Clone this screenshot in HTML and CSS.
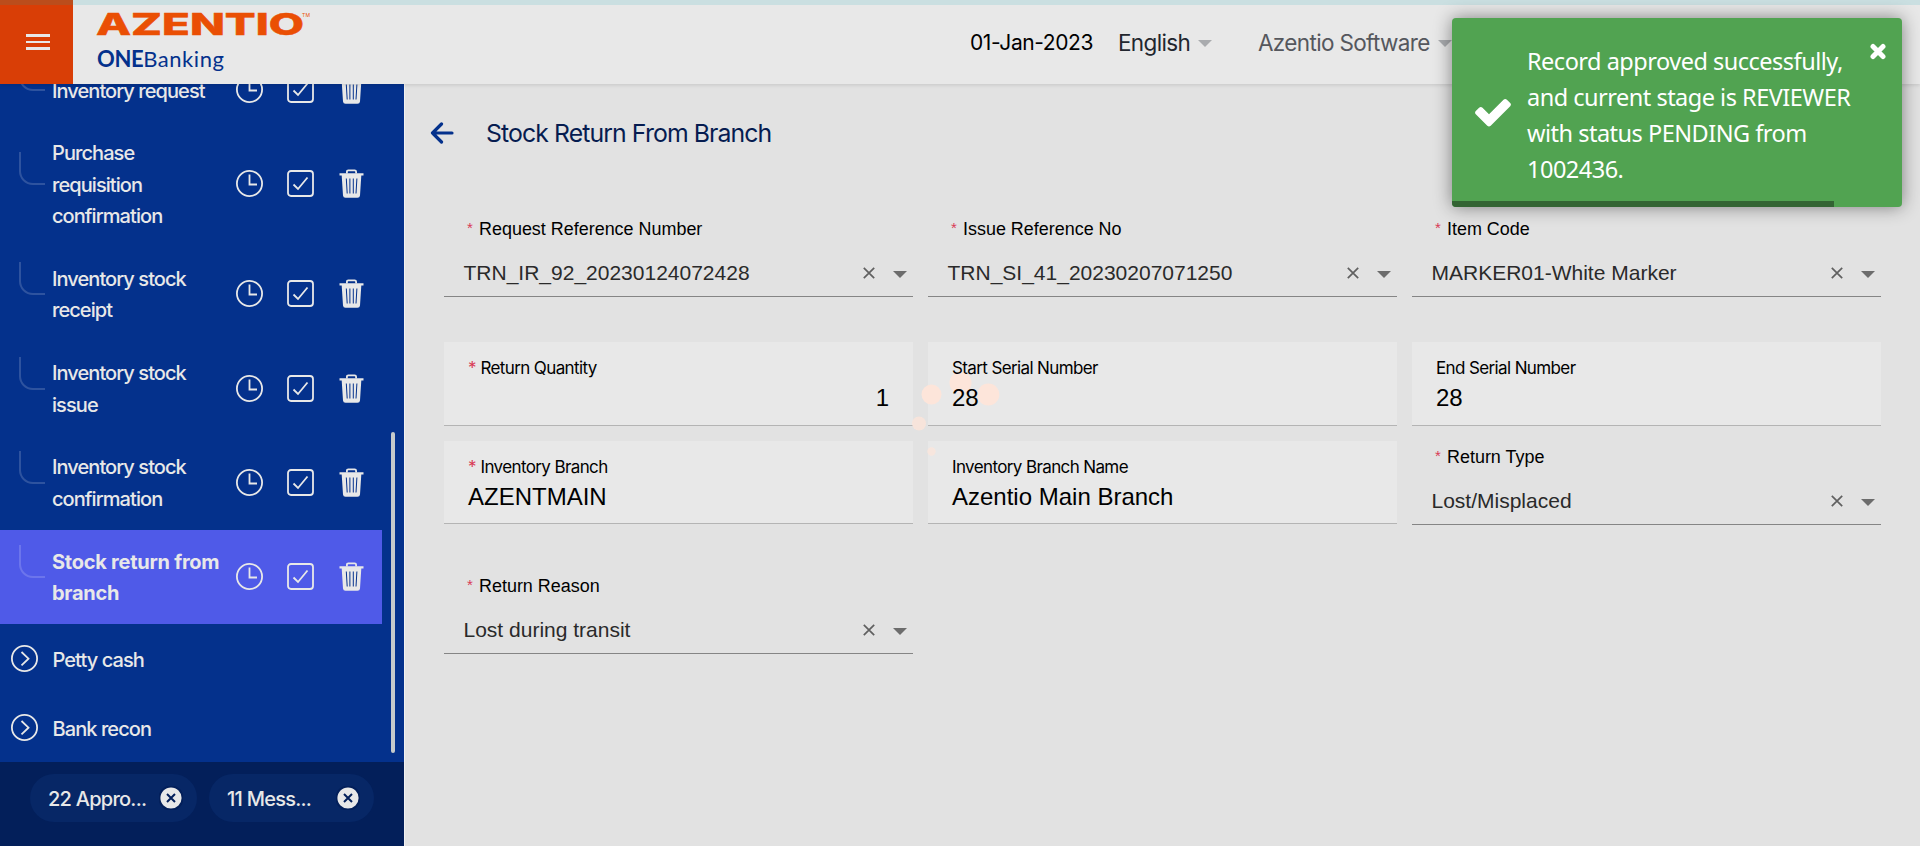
FILE: index.html
```
<!DOCTYPE html>
<html lang="en">
<head>
<meta charset="utf-8">
<title>Stock Return From Branch</title>
<link rel="stylesheet" href="styles.css">
</head>
<body>
<svg class="sprite" aria-hidden="true">
  <symbol id="clock" viewBox="0 0 27 27"><circle cx="13.5" cy="13.5" r="12.6"/><path d="M13.5 4.5v10h7.5"/></symbol>
  <symbol id="check" viewBox="0 0 27 27"><rect x="1" y="1" width="25" height="25" rx="3"/><path d="M6.500 14.500l4.500 4.500 9.500-11.500"/></symbol>
  <symbol id="trash" viewBox="0 0 25 29"><path class="solid" d="M.5 4.200h24v2.400h-2.200L21 26.500q-.2 2.300-2.500 2.300h-12q-2.300 0-2.500-2.300L2.700 6.600H.5z"/><path d="M7.900 4.500V2.800q0-1.500 1.500-1.500h6.200q1.500 0 1.500 1.500v1.700"/><path class="slit" d="M7.300 9.500l.9 15M10.900 9.500v15M14.300 9.500v15M17.900 9.500l-.9 15"/></symbol>
  <symbol id="chevron" viewBox="0 0 27 27"><circle cx="13.500" cy="13.500" r="12.600"/><path d="M10.500 7l7 6.700-7 6.700"/></symbol>
  <symbol id="clear" viewBox="0 0 12 12"><path d="M.8.800l10.400 10.400M11.200.800L.8 11.200"/></symbol>
  <symbol id="caret" viewBox="0 0 14 7"><path d="M0 0h14L7 7z"/></symbol>
  <symbol id="dismiss" viewBox="0 0 24 24"><circle cx="12" cy="12" r="11.600"/><path d="M8 8l8 8M16 8l-8 8"/></symbol>
</svg>

<header class="header">
  <button class="menu" aria-label="Menu"><span></span><span></span><span></span></button>
  <div class="brand">
    <svg class="logo" width="216" height="28" viewBox="0 0 216 28">
      <text class="logo-name" x="-1" y="25" textLength="208" lengthAdjust="spacingAndGlyphs">AZENTIO</text>
      <text class="logo-tm" x="205" y="7" textLength="8">TM</text>
    </svg>
    <div class="product"><b>ONE</b>Banking</div>
  </div>
  <div class="tools">
    <span class="date">01-Jan-2023</span>
    <span class="pick lang">English<svg><use href="#caret"/></svg></span>
    <span class="pick org">Azentio Software<svg><use href="#caret"/></svg></span>
  </div>
</header>

<div class="body">
  <aside class="sidebar">
    <nav class="nav">
      <div class="item"><i class="elbow"></i><span>Inventory request</span><div class="acts"><svg><use href="#clock"/></svg><svg><use href="#check"/></svg><svg class="bin"><use href="#trash"/></svg></div></div>
      <div class="item"><i class="elbow"></i><span>Purchase requisition confirmation</span><div class="acts"><svg><use href="#clock"/></svg><svg><use href="#check"/></svg><svg class="bin"><use href="#trash"/></svg></div></div>
      <div class="item"><i class="elbow"></i><span>Inventory stock receipt</span><div class="acts"><svg><use href="#clock"/></svg><svg><use href="#check"/></svg><svg class="bin"><use href="#trash"/></svg></div></div>
      <div class="item"><i class="elbow"></i><span>Inventory stock issue</span><div class="acts"><svg><use href="#clock"/></svg><svg><use href="#check"/></svg><svg class="bin"><use href="#trash"/></svg></div></div>
      <div class="item"><i class="elbow"></i><span>Inventory stock confirmation</span><div class="acts"><svg><use href="#clock"/></svg><svg><use href="#check"/></svg><svg class="bin"><use href="#trash"/></svg></div></div>
      <div class="item active"><i class="elbow"></i><span>Stock return from branch</span><div class="acts"><svg><use href="#clock"/></svg><svg><use href="#check"/></svg><svg class="bin"><use href="#trash"/></svg></div></div>
      <div class="group"><svg><use href="#chevron"/></svg><span>Petty cash</span></div>
      <div class="group"><svg><use href="#chevron"/></svg><span>Bank recon</span></div>
    </nav>
    <div class="thumb"></div>
    <footer class="chips">
      <div class="chip"><span>22 Appro...</span><svg><use href="#dismiss"/></svg></div>
      <div class="chip second"><span>11 Mess...</span><svg><use href="#dismiss"/></svg></div>
    </footer>
  </aside>

  <main class="main">
    <div class="title">
      <svg width="24" height="22" viewBox="0 0 24 22"><path d="M22 11H2.500M11.500 2L2.500 11l9 9"/></svg>
      <h1>Stock Return From Branch</h1>
    </div>
    <form class="grid">
      <div class="select"><label><em>*</em>Request Reference Number</label><div class="value"><span>TRN_IR_92_20230124072428</span><svg class="x"><use href="#clear"/></svg><svg class="down"><use href="#caret"/></svg></div></div>
      <div class="select"><label><em>*</em>Issue Reference No</label><div class="value"><span>TRN_SI_41_20230207071250</span><svg class="x"><use href="#clear"/></svg><svg class="down"><use href="#caret"/></svg></div></div>
      <div class="select"><label><em>*</em>Item Code</label><div class="value"><span>MARKER01-White Marker</span><svg class="x"><use href="#clear"/></svg><svg class="down"><use href="#caret"/></svg></div></div>
      <div class="card"><label><em>*</em>Return Quantity</label><div class="entry number">1</div></div>
      <div class="card"><label>Start Serial Number</label><div class="entry">28</div></div>
      <div class="card"><label>End Serial Number</label><div class="entry">28</div></div>
      <div class="card short"><label><em>*</em>Inventory Branch</label><div class="entry">AZENTMAIN</div></div>
      <div class="card short"><label>Inventory Branch Name</label><div class="entry">Azentio Main Branch</div></div>
      <div class="select"><label><em>*</em>Return Type</label><div class="value"><span>Lost/Misplaced</span><svg class="x"><use href="#clear"/></svg><svg class="down"><use href="#caret"/></svg></div></div>
      <div class="select"><label><em>*</em>Return Reason</label><div class="value"><span>Lost during transit</span><svg class="x"><use href="#clear"/></svg><svg class="down"><use href="#caret"/></svg></div></div>
    </form>
  </main>
</div>

<svg class="loader" width="90" height="90" viewBox="0 0 90 90">
  <circle cx="21.500" cy="24.500" r="10"/>
  <circle cx="50.500" cy="12.700" r="11"/>
  <circle cx="78.300" cy="24.500" r="11"/>
  <circle cx="9" cy="53.500" r="7" opacity=".8"/>
  <circle cx="21.500" cy="81.500" r="4.200" opacity=".7"/>
</svg>

<div class="toast">
  <svg class="tick" width="36" height="28" viewBox="0 0 36 28"><path d="M35.200 7.200L15.700 26.700q-1.700 1.600-3.400 0L.8 15.300q-1.500-1.600 0-3.300l3.300-3.300q1.700-1.600 3.400 0l6.500 6.500L28.500.8q1.700-1.600 3.400 0l3.300 3.200q1.500 1.600 0 3.200z"/></svg>
  <p>Record approved successfully,<br>and current stage is REVIEWER<br>with status PENDING from<br>1002436.</p>
  <svg class="close" width="16" height="17" viewBox="0 0 16 17"><path d="M3 3.500l10 10M13 3.500l-10 10"/></svg>
  <div class="progress"></div>
</div>
</body>
</html>
```

FILE: styles.css
```
* { box-sizing: border-box; }
body {
  margin: 0;
  height: 846px;
  display: flex;
  flex-direction: column;
  overflow: hidden;
  background: #e2e2e2;
  font-family: Inter, "Liberation Sans", sans-serif;
  color: #000;
}
svg { display: block; flex: none; }
.sprite { position: absolute; width: 0; height: 0; }

/* Header */
.header {
  position: relative;
  z-index: 2;
  flex: none;
  display: flex;
  height: 84px;
  border-top: 5px solid #cadfe1;
  background: #e8e8e8;
  box-shadow: 0 1px 4px rgba(0, 0, 0, .13);
}
.menu {
  flex: none;
  width: 73px;
  height: 84px;
  margin: -5px 0 0;
  padding: 0 0 5px 26px;
  border: 0;
  border-top: 5px solid #bb4d1c;
  background: #d93e06;
  display: flex;
  flex-direction: column;
  justify-content: center;
  gap: 4px;
}
.menu span { width: 24px; height: 2.500px; background: #e8e8e8; }
.brand { flex: none; width: 897px; padding: 5px 0 0 24px; }
.logo { overflow: visible; }
.logo-name { font: 800 30px Inter, sans-serif; fill: #ea4f04; stroke: #ea4f04; stroke-width: .5px; }
.logo-tm { font: 5px Inter, sans-serif; fill: #ea4f04; }
.product {
  margin-top: 7px;
  font: 22px/28px Lato, sans-serif;
  letter-spacing: .55px;
  color: #04318c;
}
.product b { letter-spacing: -.4px; }
.tools { display: flex; align-items: center; padding-bottom: 4px; white-space: nowrap; }
.date { width: 148px; font-size: 21px; letter-spacing: -.4px; }
.pick { display: flex; align-items: center; gap: 8px; font-size: 22.500px; letter-spacing: -.65px; }
.pick svg { width: 14px; height: 7px; margin-top: 1px; fill: #a9abae; }
.lang { width: 140px; color: #22262e; }
.org { color: #55575d; }

/* Sidebar */
.body { flex: 1; display: flex; min-height: 0; }
.sidebar {
  position: relative;
  flex: none;
  width: 405px;
  border-right: 1px solid #f1f1f1;
  background: #04318c;
  display: flex;
  flex-direction: column;
  font-size: 20px;
  letter-spacing: -.93px;
  font-weight: 450;
  color: #e8e8e8;
}
.nav {
  flex: 1;
  min-height: 0;
  display: flex;
  flex-direction: column;
  justify-content: flex-end;
  overflow: hidden;
}
.item {
  flex: none;
  display: flex;
  align-items: center;
  width: 382px;
  padding: 16.800px 18px 14.600px 19px;
  line-height: 31.400px;
}
.item span { width: 174px; margin-right: 10px; }
.elbow {
  flex: none;
  width: 26px;
  height: 33px;
  margin: -33px 7px 0 0;
  border: solid rgba(255, 255, 255, .17);
  border-width: 0 0 2px 2px;
  border-radius: 0 0 0 14px;
}
.acts { display: flex; align-items: center; gap: 24px; margin: -3px 0 0; fill: none; stroke: #e8e8e8; stroke-width: 1.800; }
.acts svg { width: 27px; height: 27px; }
.acts .bin { width: 25px; height: 29px; margin-left: 1px; }
.solid { fill: #e8e8e8; stroke: none; }
.slit { stroke: #04318c; stroke-width: 1; }
.active { background: #4f5ae8; font-weight: 700; letter-spacing: -.25px; }
.group { flex: none; display: flex; align-items: center; height: 69px; padding-left: 11px; gap: 14.500px; }
.group span { margin-top: 2px; }
.group svg { width: 27px; height: 27px; fill: none; stroke: #e8e8e8; stroke-width: 1.800; }
.thumb { position: absolute; left: 391px; top: 348px; width: 4px; height: 321px; border-radius: 2px; background: #c5cacb; }
.chips { flex: none; display: flex; gap: 12px; height: 84px; padding: 12px 30px; background: #031f5a; letter-spacing: -.75px; }
.chip { display: flex; align-items: center; justify-content: space-between; width: 167px; height: 48px; padding: 0 14px 0 18px; border-radius: 24px; background: #072766; }
.chip span { margin-top: 2px; }
.second { width: 165px; }
.chip svg { width: 24px; height: 24px; fill: #e8e8e8; stroke: #031f5a; stroke-width: 2; }
.chip circle { stroke: none; }

/* Form */
.main { flex: 1; padding: 32px 39px 0; }
.title { display: flex; align-items: center; height: 34px; margin-left: -14px; gap: 32px; }
.title svg { fill: none; stroke: #04318c; stroke-width: 3.200; stroke-linecap: round; stroke-linejoin: round; }
.title h1 { margin: 0; font-size: 24.800px; font-weight: 400; letter-spacing: -.9px; color: #061c50; }
.grid {
  display: grid;
  grid-template-columns: repeat(3, 469px);
  column-gap: 15px;
  align-items: start;
  margin-top: 63px;
}
.select {
  height: 84px;
  margin-bottom: 45px;
  padding: 5px 0 0;
  border-bottom: 1px solid #858585;
  font-family: "Liberation Sans", Arial, sans-serif;
}
.select label { display: flex; padding-left: 23px; font-size: 17.950px; line-height: 22px; }
em { width: 12px; font-style: normal; font-size: 15px; line-height: 19px; color: #d93a55; }
.value { display: flex; align-items: center; height: 36px; margin-top: 15px; padding: 0 6px 0 19.500px; font-size: 21px; color: #2a2a2a; }
.value span { flex: 1; }
.x { width: 12px; height: 12px; margin-right: 18px; stroke: #606060; stroke-width: 1.700; }
.down { width: 14px; height: 7px; margin-top: 3px; fill: #6c6c6c; }
.card {
  height: 84px;
  margin-bottom: 15px;
  padding: 15px 24px 0;
  border-bottom: 1px solid #b4b4b4;
  background: #e8e8e8;
}
.short { height: 83px; }
.card label { position: relative; z-index: 1; display: flex; font-size: 17px; line-height: 22px; letter-spacing: -.62px; }
.card em { width: 12.500px; font-size: 17px; line-height: 22px; }
.entry { position: relative; z-index: 1; margin-top: 4px; font: 24px/30px "Liberation Sans", Arial, sans-serif; }
.number { text-align: right; }
.loader { position: absolute; left: 910px; top: 370px; fill: #fde5da; }

/* Toast */
.toast {
  position: absolute;
  z-index: 3;
  left: 1452px;
  top: 18px;
  width: 450px;
  height: 189px;
  display: flex;
  align-items: flex-start;
  padding: 25px 16px 0 23px;
  overflow: hidden;
  border-radius: 4px;
  background: #51a351;
  color: #fff;
  box-shadow: 0 0 18px rgba(0, 0, 0, .45);
}
.toast p { flex: 1; margin: 0 0 0 16px; font: 23.500px/36px "Noto Sans", sans-serif; letter-spacing: -.5px; white-space: nowrap; }
.tick { margin-top: 56px; fill: #fff; }
.close { stroke: #fff; stroke-width: 5; stroke-linecap: round; }
.progress { position: absolute; left: 0; bottom: 0; width: 382px; height: 6px; background: #336433; }
```
